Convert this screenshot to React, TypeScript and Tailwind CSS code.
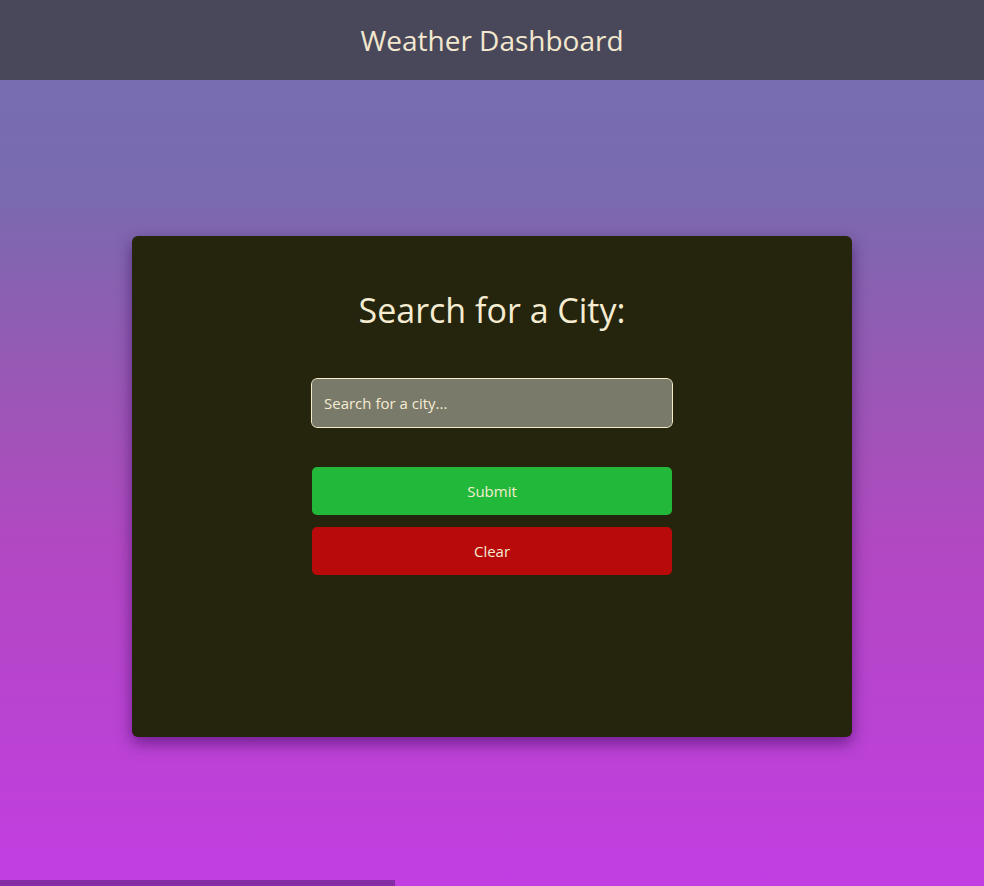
export default function App() {
  return (
    <div
      className="relative min-h-[886px] w-full flex flex-col bg-[linear-gradient(180deg,#7570b2_0%,#7a6aae_22%,#9c56b6_45%,#b248c2_62%,#c23ee2_100%)]"
      style={{ fontFamily: '"Open Sans", "Noto Sans", sans-serif' }}
    >
      <header className="h-[80px] bg-[#48485a] flex items-center justify-center">
        <h1 className="text-[28px] text-[#f3e8cf] font-normal">Weather Dashboard</h1>
      </header>
      <main className="flex justify-center pt-[156px]">
        <section className="w-[720px] h-[501px] bg-[#25240c] rounded-md shadow-[0_6px_16px_rgba(40,0,80,0.55)] flex flex-col items-center pt-[48px]">
          <h2 className="text-[34px] text-[#f5ecd2] leading-[52px]">Search for a City:</h2>
          <input
            type="text"
            placeholder="Search for a city..."
            className="mt-[42px] w-[362px] h-[50px] rounded-md bg-[#7a7a6a] border border-[#f3ecc8] outline outline-1 outline-[#25240c] px-3 text-[15px] text-[#f5ecd2] placeholder:text-[#f5ecd2]"
          />
          <button className="mt-[39px] w-[360px] h-[48px] rounded-[5px] bg-[#22b83a] text-[#f5ecd2] text-[15px]">
            Submit
          </button>
          <button className="mt-[12px] w-[360px] h-[48px] rounded-[5px] bg-[#b80a0a] text-[#f5ecd2] text-[15px]">
            Clear
          </button>
        </section>
      </main>
      <div className="absolute left-0 bottom-0 w-[395px] h-[6px] bg-[rgba(60,20,90,0.45)]" />
    </div>
  );
}
